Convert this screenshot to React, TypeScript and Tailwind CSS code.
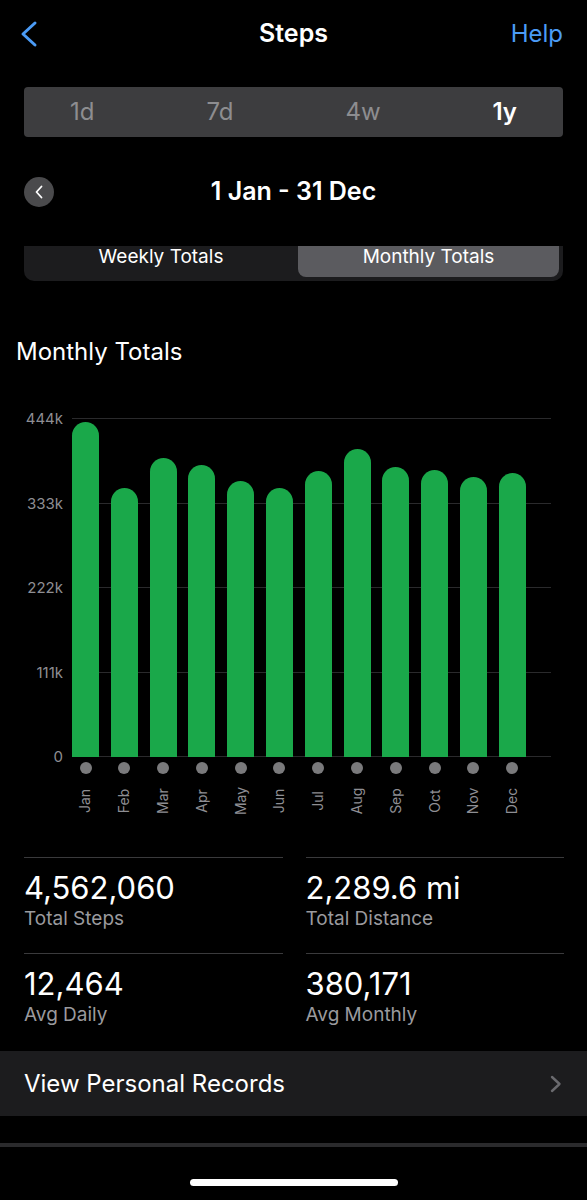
import React from "react";

const months = [
  { m: "Jan", h: 335 },
  { m: "Feb", h: 269 },
  { m: "Mar", h: 299 },
  { m: "Apr", h: 292 },
  { m: "May", h: 276 },
  { m: "Jun", h: 269 },
  { m: "Jul", h: 286 },
  { m: "Aug", h: 308 },
  { m: "Sep", h: 290 },
  { m: "Oct", h: 287 },
  { m: "Nov", h: 280 },
  { m: "Dec", h: 284 },
];

const yLabels = ["444k", "333k", "222k", "111k", "0"];

const stats = [
  { value: "4,562,060", label: "Total Steps" },
  { value: "2,289.6 mi", label: "Total Distance" },
  { value: "12,464", label: "Avg Daily" },
  { value: "380,171", label: "Avg Monthly" },
];

export default function App() {
  return (
    <div
      className="w-[587px] h-[1200px] bg-black text-white overflow-hidden flex flex-col"
      style={{ fontFamily: "Inter, 'Open Sans', sans-serif" }}
    >
      {/* nav bar */}
      <div className="h-[68px] grid grid-cols-[1fr_auto_1fr] items-center px-5">
        <svg width="18" height="28" viewBox="0 0 18 28" fill="none">
          <path d="M15 3 L3 14 L15 25" stroke="#4b9bf5" strokeWidth="3" strokeLinecap="round" strokeLinejoin="round" />
        </svg>
        <div className="text-[25px] font-semibold">Steps</div>
        <div className="text-[24px] text-[#4b9bf5] text-right pr-[4px]">Help</div>
      </div>

      {/* period selector */}
      <div className="mt-[19px] mx-6 h-[50px] rounded-[4px] bg-[#3d3d3f] flex items-center justify-between px-[46px] text-[24px] text-[#8d8d90]">
        <span>1d</span>
        <span>7d</span>
        <span>4w</span>
        <span className="text-white font-semibold">1y</span>
      </div>

      {/* date row */}
      <div className="mt-[35px] mx-6 h-[40px] grid grid-cols-[1fr_auto_1fr] items-center">
        <div className="w-[30px] h-[30px] rounded-full bg-[#4a4a4c] flex items-center justify-center">
          <svg width="10" height="14" viewBox="0 0 10 14" fill="none">
            <path d="M7.5 1.5 L2.5 7 L7.5 12.5" stroke="#ffffff" strokeWidth="1.8" strokeLinecap="round" strokeLinejoin="round" />
          </svg>
        </div>
        <div className="text-[25px] font-semibold">1 Jan - 31 Dec</div>
        <div />
      </div>

      {/* weekly / monthly toggle */}
      <div className="mt-[34px] mx-6 h-[35px] bg-[#1c1c1e] rounded-b-[10px] flex pr-1 pb-1 text-[19px]">
        <div className="flex-1 text-center leading-[22px]">Weekly Totals</div>
        <div className="w-[261px] bg-[#5b5b5f] rounded-b-[8px] text-center leading-[22px]">Monthly Totals</div>
      </div>

      <div className="mt-[57px] px-4 text-[24px] leading-[28px]">Monthly Totals</div>

      {/* chart */}
      <div className="mt-[52px] flex">
        <div className="w-[63px] h-[339px] flex flex-col justify-between text-[15px] text-[#8e8e93]">
          {yLabels.map((l) => (
            <div key={l} className="h-px flex items-center justify-end">
              <span className="leading-none">{l}</span>
            </div>
          ))}
        </div>
        <div className="ml-[9px] w-[479px]">
          <div className="grid h-[339px]">
            <div className="[grid-area:1/1] flex flex-col justify-between">
              {yLabels.map((l) => (
                <div key={l} className="h-px bg-[#2a2a2c]" />
              ))}
            </div>
            <div className="[grid-area:1/1] flex items-end gap-[11.8px]">
              {months.map((d) => (
                <div
                  key={d.m}
                  className="w-[27px] rounded-t-full bg-[#1aa84a]"
                  style={{ height: d.h }}
                />
              ))}
            </div>
          </div>
          <div className="flex gap-[11.8px]">
            {months.map((d) => (
              <div key={d.m} className="w-[27px] flex flex-col items-center">
                <div className="mt-[5px] w-3 h-3 rounded-full bg-[#7a7a7c]" />
                <div className="mt-[12px] h-[30px] flex items-center justify-center">
                  <span className="-rotate-90 whitespace-nowrap text-[14px] text-[#8e8e93] leading-none">{d.m}</span>
                </div>
              </div>
            ))}
          </div>
        </div>
      </div>

      {/* stats */}
      <div className="mt-[41px] pl-6 pr-[23px] grid grid-cols-2 gap-x-[23px]">
        {stats.map((s) => (
          <div key={s.label} className="h-[96px] border-t border-[#3a3a3c] pt-[12px]">
            <div className="text-[31px] leading-[36px]">{s.value}</div>
            <div className="mt-[2px] text-[19px] leading-[22px] text-[#9a9a9e]">{s.label}</div>
          </div>
        ))}
      </div>

      {/* personal records */}
      <div className="mt-[2px] h-[65px] bg-[#1c1c1e] flex items-center justify-between pl-6 pr-[25px]">
        <span className="text-[24px]">View Personal Records</span>
        <svg width="12" height="18" viewBox="0 0 12 18" fill="none">
          <path d="M2 2 L9.5 9 L2 16" stroke="#6a6a6e" strokeWidth="2.4" strokeLinecap="round" strokeLinejoin="round" />
        </svg>
      </div>

      <div className="mt-[27px] h-[4px] bg-[#2a2a2c]" />

      <div className="mt-[32px] mx-auto w-[208px] h-[7px] rounded-full bg-white" />
    </div>
  );
}
